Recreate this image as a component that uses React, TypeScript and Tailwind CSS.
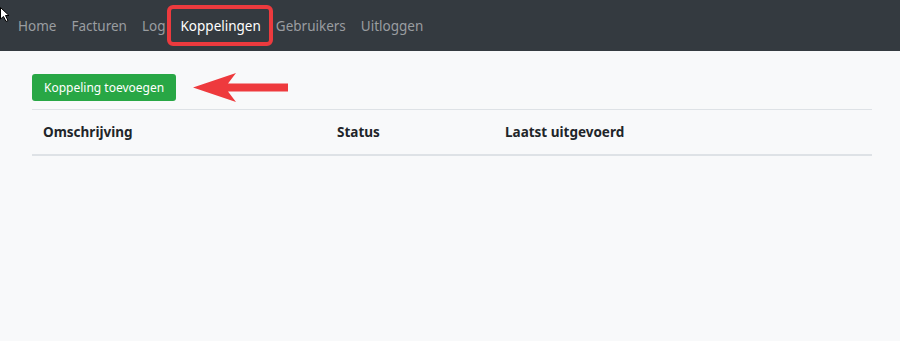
export default function App() {
  const links = ["Home", "Facturen", "Log", "Koppelingen", "Gebruikers", "Uitloggen"];

  return (
    <div className="min-h-[341px] bg-[#f8f9fa]" style={{ fontFamily: '"Noto Sans", "Open Sans", sans-serif' }}>
      <nav className="relative flex h-[51px] items-center bg-[#343a40] pl-[10.5px] pt-[1px]">
        <svg className="absolute left-0 top-[7px]" width="10" height="16" viewBox="0 0 10 16">
          <path d="M0.5 0.5 L0.5 12 L3.5 9.5 L6 14.5 L8 13.5 L5.5 8.5 L9 8.5 Z" fill="#fff" stroke="#000" strokeWidth="1" />
        </svg>
        {links.map((l) => (
          <a
            key={l}
            href="#"
            className={
              "relative px-[7.5px] text-[13.5px] leading-[22px] " +
              (l === "Koppelingen" ? "text-white" : "text-[#9a9da0]")
            }
          >
            {l}
            {l === "Koppelingen" && (
              <span className="absolute -left-[6px] -right-[5px] -top-[10px] -bottom-[9px] rounded-[6px] border-[4px] border-[#ec3a3e]" />
            )}
          </a>
        ))}
      </nav>

      <div className="ml-[32px] w-[840px] pt-[23px]">
        <div className="flex h-[27px] items-center">
          <button className="h-[27px] rounded-[3px] bg-[#28a745] px-[12px] text-[12px] text-white">
            Koppeling toevoegen
          </button>
          <svg className="ml-[17px] shrink-0" width="96" height="30" viewBox="0 0 96 30">
            <polygon points="0,14.5 43,0 35,10.5 95,10.5 95,18.5 35,18.5 43,29" fill="#ee3a3d" />
          </svg>
        </div>

        <table className="mt-[8px] w-full table-fixed border-t border-[#dee2e6] text-left">
          <thead>
            <tr className="border-b-2 border-[#dee2e6]">
              <th className="w-[305px] px-[11px] py-[12px] text-[13.5px] leading-[20px] font-bold text-[#212529]">Omschrijving</th>
              <th className="w-[168px] px-0 py-[12px] text-[13.5px] leading-[20px] font-bold text-[#212529]">Status</th>
              <th className="px-0 py-[12px] text-[13.5px] leading-[20px] font-bold text-[#212529]">Laatst uitgevoerd</th>
            </tr>
          </thead>
        </table>
      </div>
    </div>
  );
}
